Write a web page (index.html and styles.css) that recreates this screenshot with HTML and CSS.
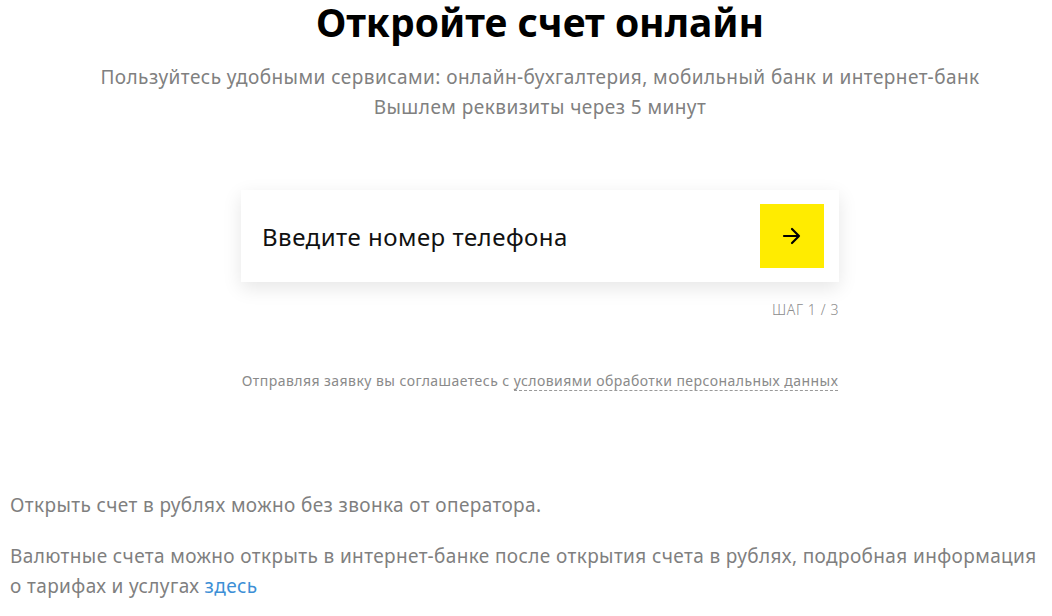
FILE: index.html
```html
<!DOCTYPE html>
<html lang="ru">
<head>
<meta charset="utf-8">
<title>Откройте счет онлайн</title>
<link rel="stylesheet" href="styles.css">
</head>
<body>
<main class="page">
  <section class="hero">
    <h1 class="title">Откройте счет онлайн</h1>
    <p class="subtitle">Пользуйтесь удобными сервисами: онлайн-бухгалтерия, мобильный банк и интернет-банк<br>Вышлем реквизиты через 5 минут</p>
    <div class="form">
      <div class="card">
        <span class="placeholder">Введите номер телефона</span>
        <button class="go" type="button" aria-label="Далее">
          <svg width="20" height="18" viewBox="0 0 20 18" fill="none" stroke="#000" stroke-width="2.2" stroke-linecap="round" stroke-linejoin="round"><path d="M2 9h15M10 2l7 7-7 7"/></svg>
        </button>
      </div>
      <div class="step">ШАГ 1 / 3</div>
      <p class="consent">Отправляя заявку вы соглашаетесь с <a class="dash" href="#">условиями обработки персональных данных</a></p>
    </div>
  </section>
  <section class="notes">
    <p class="note">Открыть счет в рублях можно без звонка от оператора.</p>
    <p class="note">Валютные счета можно открыть в интернет-банке после открытия счета в рублях, подробная информация о тарифах и услугах <a class="link" href="#">здесь</a></p>
  </section>
</main>
</body>
</html>
```
FILE: styles.css
```css
* { box-sizing: border-box; }
html, body { margin: 0; padding: 0; background: #fff; }
body { font-family: "Noto Sans", "Open Sans", sans-serif; color: #7f7f7f; }
.page { padding: 0 10px; }
.hero { display: flex; flex-direction: column; align-items: center; padding-left: 28px; }
.title {
  margin: 0;
  padding-top: 1px;
  font-family: "Noto Sans", sans-serif;
  font-weight: 700;
  font-size: 39px;
  line-height: 42px;
  color: #000;
}
.subtitle {
  margin: 19px 0 0;
  text-align: center;
  font-size: 19px;
  line-height: 30px;
  letter-spacing: 0.45px;
  color: #808080;
}
.form { width: 598px; margin-top: 68px; display: flex; flex-direction: column; }
.card {
  height: 92px;
  background: #fff;
  box-shadow: 0 6px 18px rgba(0,0,0,0.10);
  display: flex; align-items: center; justify-content: space-between;
  padding: 0 15px 0 21px;
}
.placeholder { font-size: 24px; letter-spacing: 0.5px; color: #111; }
.go {
  width: 64px; height: 64px; border: 0; padding: 0;
  background: #ffec00;
  display: flex; align-items: center; justify-content: center;
  cursor: pointer;
}
.step { align-self: flex-end; margin-top: 18px; font-size: 14px; color: #8c8c8c; letter-spacing: 0.6px; font-weight: 300; }
.consent { margin: 52px 0 0; font-size: 14px; letter-spacing: 0.45px; text-align: center; color: #8a8a8a; }
.dash { color: #8a8a8a; text-decoration: none; border-bottom: 1px dashed #999; }
.notes { margin: 100px -10px 0 0; }
.note { margin: 0 0 21px; font-size: 19px; line-height: 30px; letter-spacing: 0.38px; color: #7f7f7f; }
.link { color: #3d8fd6; text-decoration: none; }
```
